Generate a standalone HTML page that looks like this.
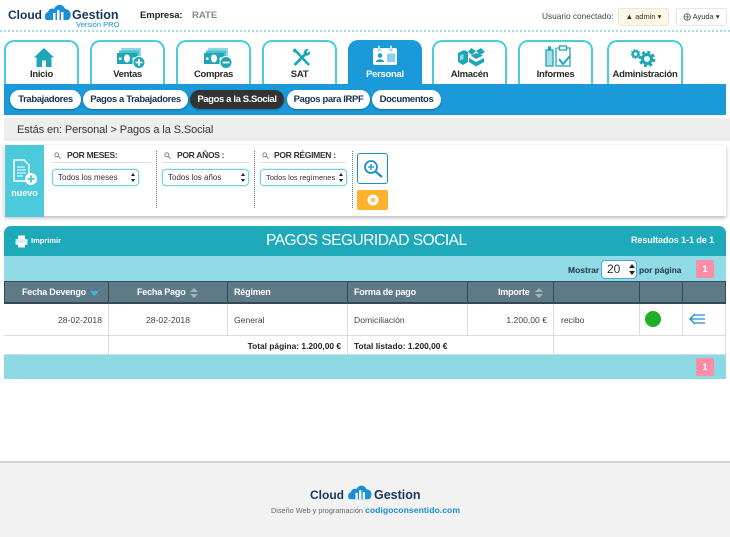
<!DOCTYPE html>
<html><head><meta charset="utf-8">
<style>
html,body{margin:0;padding:0;background:#fff}
#p{position:relative;width:730px;height:537px;overflow:hidden;font-family:"Liberation Sans",sans-serif;color:#333;background:#fff}
#p div,#p svg{position:absolute}
.t{white-space:nowrap}
.tab{top:40px;height:44px;box-sizing:border-box;border:2px solid #4ccbdb;border-bottom:0;border-radius:10px 10px 0 0;background:#fff}
.tl{top:69px;height:12px;line-height:12px;font-size:9.5px;letter-spacing:-.3px;font-weight:bold;color:#2a2a2a;text-align:center;white-space:nowrap}
.pill{top:90px;height:19px;line-height:19px;border-radius:10px;background:#fff;color:#17324f;font-size:9.5px;letter-spacing:-.38px;font-weight:bold;text-align:center;white-space:nowrap;box-shadow:0 1px 2px rgba(0,0,0,.3)}
.sel{top:169px;height:17px;box-sizing:border-box;border:1px solid #6fd3e0;border-radius:4px;background:#fff;font-size:8px;line-height:15px;padding-left:5px;color:#333;white-space:nowrap;box-shadow:0 0 2px #9fe3ec}
.sel:after{content:"";position:absolute;right:3px;top:3px;border:2px solid transparent;border-bottom:3px solid #222;border-top:0}
.sel:before{content:"";position:absolute;right:3px;top:9px;border:2px solid transparent;border-top:3px solid #222;border-bottom:0}
.fh{top:150px;font-size:8.5px;letter-spacing:-.3px;font-weight:bold;color:#333;white-space:nowrap;line-height:11px}
.hr{top:162px;height:1px;background:#ddd}
.dv{top:151px;height:57px;border-left:1px dotted #777}
.th{top:281px;height:23px;box-sizing:border-box;background:#5f7a87;border:1px solid #36495a;border-bottom:2px solid #36495a}
.tt{top:286px;color:#fff;font-size:9px;letter-spacing:-.2px;font-weight:bold;line-height:12px;white-space:nowrap}
.td{box-sizing:border-box;font-size:8.6px;line-height:12px;color:#444;white-space:nowrap}
.vl{width:1px;background:#ddd}
.pg{left:696px;width:18px;height:18px;background:#fb8ea6;border-radius:2px;color:#fff;font-size:9px;font-weight:bold;text-align:center;line-height:18px}
.btn{top:8px;height:18px;box-sizing:border-box;border:1px solid #e6e6e6;border-radius:3px;font-size:7.5px;line-height:16px;text-align:center;color:#333;white-space:nowrap}
</style></head><body>
<div id="p">

<!-- header logo -->
<div class="t" style="left:8px;top:4px;font-size:12px;font-weight:bold;color:#17365d;line-height:22px">Cloud</div>
<svg style="left:44px;top:2px" width="28" height="20" viewBox="0 0 28 20"><path d="M3 18C0 18 0 11 4 10 5 6 9 6 10 7 12 2 19 1 21 7 26 7 28 12 26 16 25 18 24 18 22 18Z" fill="#1a8fd6"/><rect x="9" y="11" width="2.5" height="7" fill="#fff"/><rect x="13" y="8" width="2.5" height="10" fill="#fff"/><rect x="17" y="10" width="2.5" height="8" fill="#fff"/></svg>
<div class="t" style="left:72px;top:4px;font-size:12.5px;font-weight:bold;color:#17365d;line-height:22px">Gestion</div>
<div class="t" style="left:76px;top:20px;font-size:7.5px;color:#1a8fd6;line-height:9px">Versión PRO</div>
<div class="t" style="left:140px;top:10px;font-size:9.5px;letter-spacing:-.1px;font-weight:bold;color:#222;line-height:12px">Empresa:</div>
<div class="t" style="left:192px;top:10px;font-size:9.5px;font-weight:bold;color:#888;line-height:12px">RATE</div>
<div class="t" style="left:542px;top:11px;font-size:8.3px;color:#444;line-height:11px">Usuario conectado:</div>
<div class="btn" style="left:618px;width:51px;background:#fdf7e3">&#9650; admin &#9662;</div>
<div class="btn" style="left:676px;width:51px;background:#fff">&#10753; Ayuda &#9662;</div>
<div style="left:0;top:30px;width:730px;height:0;border-top:2px dotted #a8dbe8"></div>

<!-- tabs -->
<div class="tab" style="left:4px;width:75px"></div>
<div class="tab" style="left:90px;width:75px"></div>
<div class="tab" style="left:176px;width:75px"></div>
<div class="tab" style="left:262px;width:75px"></div>
<div class="tab" style="left:348px;width:74px;background:#1a9ad9;border-color:#1a9ad9"></div>
<div class="tab" style="left:432px;width:75px"></div>
<div class="tab" style="left:518px;width:75px"></div>
<div class="tab" style="left:607px;width:76px"></div>

<!-- Inicio -->
<svg style="left:34px;top:48px" width="20" height="19" viewBox="0 0 20 19"><path d="M10 0 20 9.5H17.5V19H12V12.5H8V19H2.5V9.5H0Z" fill="#1ea6b6"/></svg>
<!-- Ventas -->
<svg style="left:116px;top:47px" width="30" height="22" viewBox="0 0 30 22"><rect x="5" y="1" width="20" height="9" fill="#8ed8e2"/><rect x="3" y="3.5" width="20" height="10" fill="#4cc0cf"/><rect x="1" y="6" width="20" height="11" fill="#1ea6b6"/><ellipse cx="11" cy="11.5" rx="3" ry="4" fill="#fff"/><rect x="3" y="10.5" width="2.5" height="2.5" fill="#fff"/><rect x="16.5" y="10.5" width="2.5" height="2.5" fill="#fff"/><circle cx="23" cy="15.5" r="6" fill="#1ea6b6" stroke="#fff"/><path d="M19.5 15.5H26.5M23 12V19" stroke="#fff" stroke-width="1.8"/></svg>
<!-- Compras -->
<svg style="left:203px;top:47px" width="30" height="22" viewBox="0 0 30 22"><rect x="5" y="1" width="20" height="9" fill="#8ed8e2"/><rect x="3" y="3.5" width="20" height="10" fill="#4cc0cf"/><rect x="1" y="6" width="20" height="11" fill="#1ea6b6"/><ellipse cx="11" cy="11.5" rx="3" ry="4" fill="#fff"/><rect x="3" y="10.5" width="2.5" height="2.5" fill="#fff"/><rect x="16.5" y="10.5" width="2.5" height="2.5" fill="#fff"/><circle cx="23" cy="15.5" r="6" fill="#1ea6b6" stroke="#fff"/><path d="M19.5 15.5H26.5" stroke="#fff" stroke-width="1.8"/></svg>
<!-- SAT -->
<svg style="left:292px;top:48px" width="19" height="19" viewBox="0 0 19 19"><path d="M2 1 17 17" stroke="#1ea6b6" stroke-width="2.5"/><path d="M0.5 3 3 0.5 5 3 3 5Z" fill="#1ea6b6"/><path d="M2.5 17 13 6.5" stroke="#1ea6b6" stroke-width="2.8"/><path d="M12 7C10.5 3.5 13.5 0 17 1L14.5 3.5 15.5 5 18 3C19 6.5 15.5 9 12 7Z" fill="#1ea6b6"/></svg>
<!-- Personal -->
<svg style="left:372px;top:45px" width="26" height="21" viewBox="0 0 26 21"><rect x="1" y="3" width="24" height="17" rx="2" fill="#fff"/><rect x="6" y="0.5" width="2" height="5" fill="#fff" stroke="#1a9ad9" stroke-width=".5"/><rect x="18" y="0.5" width="2" height="5" fill="#fff" stroke="#1a9ad9" stroke-width=".5"/><circle cx="8" cy="10.5" r="2.2" fill="#1a9ad9"/><path d="M4 17C4 13.5 12 13.5 12 17Z" fill="#1a9ad9"/><rect x="15" y="8.5" width="8" height="8.5" fill="#8fcdee"/></svg>
<!-- Almacen -->
<svg style="left:457px;top:47px" width="29" height="21" viewBox="0 0 29 21"><path d="M1 6 7 3 11 5V15L6 18 1 15Z" fill="#1ea6b6"/><path d="M3 8.5 6.5 7V12L3 13.5Z" fill="#8ed8e2"/><path d="M11 5 14 1 19 4 15 8ZM19 4 24 1 28 5 23 8Z" fill="#1ea6b6"/><path d="M14 8.5 19 6 26 8.5 19 12Z" fill="#1ea6b6"/><path d="M12 11 19 15 27 11V15L19 19.5 12 15Z" fill="#1ea6b6"/></svg>
<!-- Informes -->
<svg style="left:545px;top:45px" width="27" height="23" viewBox="0 0 27 23" fill="none" stroke="#1ea6b6" stroke-width="1.3"><rect x="1" y="5" width="7" height="16" fill="#a8e0e8"/><rect x="3.5" y="2" width="2" height="3" fill="#1ea6b6"/><path d="M12 3H25V21H11V3"/><rect x="14.5" y="1" width="7" height="4" fill="#fff"/><path d="M14 14 18 19 25 11" stroke-width="2"/></svg>
<!-- Admin -->
<svg style="left:631px;top:49px" width="25" height="18" viewBox="0 0 25 18"><circle cx="4.5" cy="5" r="2.8" fill="none" stroke="#1ea6b6" stroke-width="2.2"/><circle cx="4.5" cy="5" r="4.3" fill="none" stroke="#1ea6b6" stroke-width="1.2" stroke-dasharray="1.5 1.5"/><circle cx="16" cy="10" r="4.5" fill="none" stroke="#1ea6b6" stroke-width="3"/><circle cx="16" cy="10" r="7" fill="none" stroke="#1ea6b6" stroke-width="2.5" stroke-dasharray="3 2.5"/></svg>

<div class="tl" style="left:4px;width:75px">Inicio</div>
<div class="tl" style="left:90px;width:75px">Ventas</div>
<div class="tl" style="left:176px;width:75px">Compras</div>
<div class="tl" style="left:262px;width:75px">SAT</div>
<div class="tl" style="left:348px;width:74px;color:#fff">Personal</div>
<div class="tl" style="left:432px;width:75px">Almacén</div>
<div class="tl" style="left:518px;width:75px">Informes</div>
<div class="tl" style="left:607px;width:76px">Administración</div>

<!-- blue bar -->
<div style="left:4px;top:84px;width:722px;height:31px;background:#1a9ad9"></div>
<div class="pill" style="left:10px;width:71px">Trabajadores</div>
<div class="pill" style="left:83px;width:105px">Pagos a Trabajadores</div>
<div class="pill" style="left:190px;width:94px;background:#333;color:#fff">Pagos a la S.Social</div>
<div class="pill" style="left:287px;width:83px">Pagos para IRPF</div>
<div class="pill" style="left:372px;width:69px">Documentos</div>

<!-- breadcrumb -->
<div style="left:4px;top:118px;width:726px;height:23px;background:#eee"></div>
<div class="t" style="left:17px;top:123px;font-size:11px;letter-spacing:-.1px;color:#333;line-height:14px">Estás en: Personal &gt; Pagos a la S.Social</div>

<!-- filters -->
<div style="left:4px;top:145px;width:722px;height:71px;background:#fff;box-shadow:0 2px 4px rgba(0,0,0,.28)"></div>
<div style="left:5px;top:145px;width:39px;height:72px;background:#4cc9da"></div>
<svg style="left:12px;top:159px" width="26" height="28" viewBox="0 0 26 28"><path d="M2 1H12L17 6V22H2Z" fill="none" stroke="#fff" stroke-width="1.5"/><path d="M5 8H13M5 11H14M5 14H14M5 17H11" stroke="#fff"/><circle cx="19" cy="20" r="6" fill="#fff"/><path d="M15.5 20H22.5M19 16.5V23.5" stroke="#4cc9da" stroke-width="1.8"/></svg>
<div class="t" style="left:5px;top:188px;width:39px;text-align:center;font-size:9px;font-weight:bold;color:#fff;line-height:11px">nuevo</div>

<svg style="left:54px;top:152px" width="7" height="7" viewBox="0 0 7 7"><circle cx="2.8" cy="2.8" r="2" fill="none" stroke="#888"/><path d="M4.5 4.5 6.5 6.5" stroke="#888" stroke-width="1.2"/></svg>
<svg style="left:164px;top:152px" width="7" height="7" viewBox="0 0 7 7"><circle cx="2.8" cy="2.8" r="2" fill="none" stroke="#888"/><path d="M4.5 4.5 6.5 6.5" stroke="#888" stroke-width="1.2"/></svg>
<svg style="left:262px;top:152px" width="7" height="7" viewBox="0 0 7 7"><circle cx="2.8" cy="2.8" r="2" fill="none" stroke="#888"/><path d="M4.5 4.5 6.5 6.5" stroke="#888" stroke-width="1.2"/></svg>
<div class="fh" style="left:67px">POR MESES:</div>
<div class="fh" style="left:177px">POR AÑOS :</div>
<div class="fh" style="left:274px">POR RÉGIMEN :</div>
<div class="hr" style="left:52px;width:99px"></div>
<div class="hr" style="left:162px;width:87px"></div>
<div class="hr" style="left:260px;width:86px"></div>
<div class="sel" style="left:52px;width:87px">Todos los meses</div>
<div class="sel" style="left:162px;width:87px">Todos los años</div>
<div class="sel" style="left:260px;width:87px;font-size:7.5px">Todos los regímenes</div>
<div class="dv" style="left:156px"></div>
<div class="dv" style="left:254px"></div>
<div class="dv" style="left:352px"></div>
<div style="left:357px;top:153px;width:31px;height:31px;box-sizing:border-box;border:1px solid #1a8fd0;border-radius:3px;background:#fff"></div>
<svg style="left:363px;top:159px" width="20" height="20" viewBox="0 0 20 20"><circle cx="8" cy="8" r="6" fill="none" stroke="#1a8fd0" stroke-width="1.8"/><path d="M12.5 12.5 19 18" stroke="#1a8fd0" stroke-width="2.2"/><path d="M5 8H11M8 5V11" stroke="#1a8fd0" stroke-width="1.3"/></svg>
<div style="left:357px;top:190px;width:31px;height:20px;background:#fdb22d;border-radius:2px"></div>
<svg style="left:367px;top:194px" width="12" height="12" viewBox="0 0 12 12"><circle cx="6" cy="6" r="5.5" fill="#fff"/><path d="M4 4 8 8M8 4 4 8" stroke="#fdb22d" stroke-width="1.5"/></svg>

<!-- table header -->
<div style="left:4px;top:226px;width:722px;height:30px;background:#1eaaba;border-radius:7px 7px 0 0"></div>
<svg style="left:15px;top:235px" width="13" height="13" viewBox="0 0 13 13"><rect x="3" y="0.5" width="7" height="4" fill="#fff"/><rect x="0.5" y="4" width="12" height="6" rx="1" fill="#d8f1f4"/><rect x="3" y="8" width="7" height="4.5" fill="#fff"/></svg>
<div class="t" style="left:31px;top:236px;font-size:7.5px;font-weight:bold;color:#fff;line-height:10px">Imprimir</div>
<div class="t" style="left:266px;top:231px;font-size:15.5px;letter-spacing:-.5px;color:#fff;line-height:19px">PAGOS SEGURIDAD SOCIAL</div>
<div class="t" style="left:631px;top:235px;font-size:9px;letter-spacing:-.08px;font-weight:bold;color:#fff;line-height:11px">Resultados 1-1 de 1</div>

<div style="left:4px;top:256px;width:722px;height:25px;background:#90dbe5"></div>
<div class="t" style="left:568px;top:264px;font-size:8.5px;font-weight:bold;color:#234;line-height:12px">Mostrar</div>
<div style="left:601px;top:260px;width:36px;height:19px;box-sizing:border-box;background:#fff;border:1px solid #4aa7dc;border-radius:4px;font-size:12px;line-height:17px;padding-left:5px;color:#333">20</div>
<svg style="left:629px;top:264px" width="6" height="11" viewBox="0 0 6 11"><path d="M3 0 6 4H0ZM3 11 0 7H6Z" fill="#222"/></svg>
<div class="t" style="left:639px;top:264px;font-size:8.3px;font-weight:bold;color:#234;line-height:12px">por página</div>
<div class="pg" style="top:260px">1</div>

<!-- thead -->
<div class="th" style="left:4px;width:105px"></div>
<div class="th" style="left:108px;width:120px"></div>
<div class="th" style="left:227px;width:121px"></div>
<div class="th" style="left:347px;width:121px"></div>
<div class="th" style="left:467px;width:87px"></div>
<div class="th" style="left:553px;width:87px"></div>
<div class="th" style="left:639px;width:44px"></div>
<div class="th" style="left:682px;width:44px"></div>
<div class="tt" style="left:22px">Fecha Devengo</div>
<svg style="left:90px;top:291px" width="9" height="5" viewBox="0 0 9 5"><path d="M0 0H9L4.5 5Z" fill="#3fb4ea"/></svg>
<div class="tt" style="left:137px">Fecha Pago</div>
<svg style="left:190px;top:288px" width="8" height="10" viewBox="0 0 8 10"><path d="M4 0 8 4H0ZM4 10 0 6H8Z" fill="#a6b4bb"/></svg>
<div class="tt" style="left:234px">Régimen</div>
<div class="tt" style="left:354px">Forma de pago</div>
<div class="tt" style="left:498px">Importe</div>
<svg style="left:535px;top:288px" width="8" height="10" viewBox="0 0 8 10"><path d="M4 0 8 4H0ZM4 10 0 6H8Z" fill="#a6b4bb"/></svg>

<!-- row -->
<div style="left:4px;top:335px;width:722px;height:1px;background:#ddd"></div>
<div style="left:4px;top:354px;width:722px;height:1px;background:#cde"></div>
<div class="vl" style="left:108px;top:304px;height:51px"></div>
<div class="vl" style="left:227px;top:304px;height:31px"></div>
<div class="vl" style="left:347px;top:304px;height:51px"></div>
<div class="vl" style="left:467px;top:304px;height:31px"></div>
<div class="vl" style="left:553px;top:304px;height:51px"></div>
<div class="vl" style="left:639px;top:304px;height:31px"></div>
<div class="vl" style="left:682px;top:304px;height:31px"></div>
<div class="vl" style="left:725px;top:304px;height:51px"></div>
<div class="td" style="left:4px;top:314px;width:98px;text-align:right">28-02-2018</div>
<div class="td" style="left:108px;top:314px;width:120px;text-align:center">28-02-2018</div>
<div class="td" style="left:234px;top:314px">General</div>
<div class="td" style="left:354px;top:314px">Domiciliación</div>
<div class="td" style="left:467px;top:314px;width:80px;text-align:right">1.200,00 €</div>
<div class="td" style="left:561px;top:314px">recibo</div>
<div style="left:645px;top:311px;width:16px;height:16px;border-radius:50%;background:#21ad28"></div>
<svg style="left:689px;top:313px" width="17" height="12" viewBox="0 0 17 12" fill="none" stroke="#1a8fd6" stroke-width="1.3"><path d="M6 1 1 6 6 11"/><path d="M1 6H16M6 2H16M6 10H16"/></svg>
<div class="td" style="left:108px;top:340px;width:233px;text-align:right;font-weight:bold;color:#222;font-size:8.4px">Total página: 1.200,00 €</div>
<div class="td" style="left:354px;top:340px;font-weight:bold;color:#222;font-size:8.4px">Total listado: 1.200,00 €</div>

<!-- foot -->
<div style="left:4px;top:355px;width:722px;height:24px;background:#8cd9e3"></div>
<div class="pg" style="top:358px">1</div>

<!-- footer -->
<div style="left:0;top:461px;width:730px;height:76px;box-sizing:border-box;background:#f2f2f2;border-top:2px solid #d4d4d4"></div>
<div class="t" style="left:310px;top:487px;font-size:12px;font-weight:bold;color:#17365d;line-height:16px">Cloud</div>
<svg style="left:347px;top:483px" width="26" height="18" viewBox="0 0 28 20"><path d="M3 18C0 18 0 11 4 10 5 6 9 6 10 7 12 2 19 1 21 7 26 7 28 12 26 16 25 18 24 18 22 18Z" fill="#1a8fd6"/><rect x="9" y="11" width="2.5" height="7" fill="#fff"/><rect x="13" y="8" width="2.5" height="10" fill="#fff"/><rect x="17" y="10" width="2.5" height="8" fill="#fff"/></svg>
<div class="t" style="left:374px;top:487px;font-size:12.5px;font-weight:bold;color:#17365d;line-height:16px">Gestion</div>
<div class="t" style="left:271px;top:505px;font-size:7.3px;color:#666;line-height:11px">Diseño Web y programación</div>
<div class="t" style="left:365px;top:504px;font-size:8.7px;font-weight:bold;color:#1a8fd6;line-height:12px">codigoconsentido.com</div>
</div>
</body></html>
